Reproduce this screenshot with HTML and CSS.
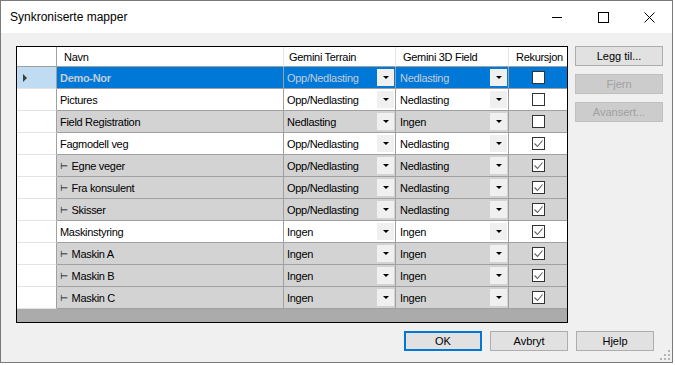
FILE: index.html
```html
<!DOCTYPE html>
<html lang="nb">
<head>
  <meta charset="UTF-8" />
  <title>Synkroniserte mapper</title>
  <link rel="stylesheet" href="styles.css">
</head>
<body>
  <div class="window">
    <div class="titlebar">
      <span class="title">Synkroniserte mapper</span>
      <div class="controls">
        <span><svg width="10" height="10" viewBox="0 0 10 10"><path d="M0 5.5h10" stroke="#000" stroke-width="1"/></svg></span>
        <span><svg width="11" height="11" viewBox="0 0 11 11"><rect x="0.5" y="0.5" width="10" height="10" fill="none" stroke="#000"/></svg></span>
        <span><svg width="11" height="11" viewBox="0 0 11 11"><path d="M0.5 0.5l10 10M10.5 0.5l-10 10" stroke="#000" stroke-width="1"/></svg></span>
      </div>
    </div>

    <div class="content">
      <div class="main">
        <div class="grid">
          <div class="row head">
            <div class="rh"></div>
            <div class="name">Navn</div>
            <div class="terrain">Gemini Terrain</div>
            <div class="field">Gemini 3D Field</div>
            <div class="rek">Rekursjon</div>
          </div>

          <div class="row sel">
            <div class="rh"><i class="pointer"></i></div>
            <div class="name"><b>Demo-Nor</b></div>
            <div class="terrain"><span>Opp/Nedlasting</span><i class="drop"></i></div>
            <div class="field"><span>Nedlasting</span><i class="drop"></i></div>
            <div class="rek"><i class="check"></i></div>
          </div>
          <div class="row">
            <div class="rh"></div>
            <div class="name">Pictures</div>
            <div class="terrain"><span>Opp/Nedlasting</span><i class="drop"></i></div>
            <div class="field"><span>Nedlasting</span><i class="drop"></i></div>
            <div class="rek"><i class="check"></i></div>
          </div>
          <div class="row alt">
            <div class="rh"></div>
            <div class="name">Field Registration</div>
            <div class="terrain"><span>Nedlasting</span><i class="drop"></i></div>
            <div class="field"><span>Ingen</span><i class="drop"></i></div>
            <div class="rek"><i class="check"></i></div>
          </div>
          <div class="row">
            <div class="rh"></div>
            <div class="name">Fagmodell veg</div>
            <div class="terrain"><span>Opp/Nedlasting</span><i class="drop"></i></div>
            <div class="field"><span>Nedlasting</span><i class="drop"></i></div>
            <div class="rek"><i class="check on"></i></div>
          </div>
          <div class="row alt">
            <div class="rh"></div>
            <div class="name"><span class="branch">⊢</span>Egne veger</div>
            <div class="terrain"><span>Opp/Nedlasting</span><i class="drop"></i></div>
            <div class="field"><span>Nedlasting</span><i class="drop"></i></div>
            <div class="rek"><i class="check on"></i></div>
          </div>
          <div class="row alt">
            <div class="rh"></div>
            <div class="name"><span class="branch">⊢</span>Fra konsulent</div>
            <div class="terrain"><span>Opp/Nedlasting</span><i class="drop"></i></div>
            <div class="field"><span>Nedlasting</span><i class="drop"></i></div>
            <div class="rek"><i class="check on"></i></div>
          </div>
          <div class="row alt">
            <div class="rh"></div>
            <div class="name"><span class="branch">⊢</span>Skisser</div>
            <div class="terrain"><span>Opp/Nedlasting</span><i class="drop"></i></div>
            <div class="field"><span>Nedlasting</span><i class="drop"></i></div>
            <div class="rek"><i class="check on"></i></div>
          </div>
          <div class="row">
            <div class="rh"></div>
            <div class="name">Maskinstyring</div>
            <div class="terrain"><span>Ingen</span><i class="drop"></i></div>
            <div class="field"><span>Ingen</span><i class="drop"></i></div>
            <div class="rek"><i class="check on"></i></div>
          </div>
          <div class="row alt">
            <div class="rh"></div>
            <div class="name"><span class="branch">⊢</span>Maskin A</div>
            <div class="terrain"><span>Ingen</span><i class="drop"></i></div>
            <div class="field"><span>Ingen</span><i class="drop"></i></div>
            <div class="rek"><i class="check on"></i></div>
          </div>
          <div class="row alt">
            <div class="rh"></div>
            <div class="name"><span class="branch">⊢</span>Maskin B</div>
            <div class="terrain"><span>Ingen</span><i class="drop"></i></div>
            <div class="field"><span>Ingen</span><i class="drop"></i></div>
            <div class="rek"><i class="check on"></i></div>
          </div>
          <div class="row alt">
            <div class="rh"></div>
            <div class="name"><span class="branch">⊢</span>Maskin C</div>
            <div class="terrain"><span>Ingen</span><i class="drop"></i></div>
            <div class="field"><span>Ingen</span><i class="drop"></i></div>
            <div class="rek"><i class="check on"></i></div>
          </div>
        </div>

        <div class="side">
          <button class="btn">Legg til...</button>
          <button class="btn" disabled>Fjern</button>
          <button class="btn" disabled>Avansert...</button>
        </div>
      </div>

      <div class="footer">
        <button class="btn default">OK</button>
        <button class="btn">Avbryt</button>
        <button class="btn">Hjelp</button>
      </div>

      <svg class="grip" width="12" height="12" viewBox="0 0 12 12">
        <rect x="9" y="1" width="2" height="2" fill="#b4b4b4"/>
        <rect x="5" y="5" width="2" height="2" fill="#b4b4b4"/>
        <rect x="9" y="5" width="2" height="2" fill="#b4b4b4"/>
        <rect x="1" y="9" width="2" height="2" fill="#b4b4b4"/>
        <rect x="5" y="9" width="2" height="2" fill="#b4b4b4"/>
        <rect x="9" y="9" width="2" height="2" fill="#b4b4b4"/>
      </svg>
    </div>
  </div>
</body>
</html>
```

FILE: styles.css
```css
* {
  margin: 0;
  padding: 0;
  box-sizing: border-box;
}

body {
  background: #fff;
  font-family: "Liberation Sans", Arial, sans-serif;
  font-size: 11px;
  color: #000;
}

.window {
  width: 673px;
  height: 363px;
  border: 1px solid #7a7a7a;
  display: flex;
  flex-direction: column;
}

/* Title bar */
.titlebar {
  height: 32px;
  flex-shrink: 0;
  background: #fff;
  display: flex;
  align-items: center;
}

.title {
  flex: 1;
  padding-left: 9px;
  font-size: 12px;
}

.controls {
  display: flex;
  align-self: stretch;
}

.controls span {
  width: 46px;
  display: flex;
  align-items: center;
  justify-content: center;
}

/* Dialog body */
.content {
  flex: 1;
  position: relative;
  background: #f0f0f0;
  padding: 13px 0 0 15px;
}

.main {
  display: flex;
  align-items: flex-start;
  gap: 7px;
}

.grid {
  width: 552px;
  height: 277px;
  border: 1px solid #000;
  background: #ababab;
  display: flex;
  flex-direction: column;
  letter-spacing: -0.3px;
}

.row {
  display: flex;
  height: 22px;
  flex-shrink: 0;
  background: #fff;
}

.row > div {
  display: flex;
  align-items: center;
  border-right: 1px solid #a0a0a0;
  border-bottom: 1px solid #a0a0a0;
  white-space: nowrap;
  overflow: hidden;
}

.row .rh {
  width: 40px;
  background: #fff;
  border-bottom-color: #e3e3e3;
}

.row .name {
  width: 227px;
  padding-left: 3px;
}

.row .terrain {
  width: 112px;
  padding-left: 3px;
}

.row .field {
  width: 113px;
  padding-left: 4px;
}

.row .rek {
  width: 58px;
  border-right: 0;
  justify-content: center;
}

.row.alt {
  background: #d3d3d3;
}

.row.sel {
  background: #0078d7;
  color: #c3cdd8;
}

.row.sel .rh {
  background: #bfdcf3;
}

/* Column headers */
.row.head {
  height: 20px;
}

.row.head > div {
  border-right-color: #e5e5e5;
}

.row.head .rh {
  border-right-color: #a0a0a0;
  border-bottom-color: #a0a0a0;
}

.row.head .name {
  padding-left: 7px;
}

.row.head .terrain {
  padding-left: 5px;
}

.row.head .field {
  padding-left: 7px;
}

.row.head .rek {
  justify-content: flex-start;
  padding-left: 7px;
}

.pointer {
  margin-left: 6px;
  border-left: 4px solid #3c3c3c;
  border-top: 4px solid transparent;
  border-bottom: 4px solid transparent;
}

.branch {
  font-family: "DejaVu Sans", sans-serif;
  font-size: 9px;
  margin-right: 4px;
}

.drop {
  margin-left: auto;
  margin-right: 1px;
  width: 17px;
  height: 17px;
  flex-shrink: 0;
  background: #f0f0f0;
  display: flex;
  align-items: center;
  justify-content: center;
}

.drop::after {
  content: "";
  border-left: 3px solid transparent;
  border-right: 3px solid transparent;
  border-top: 3px solid #000;
}

.check {
  width: 13px;
  height: 13px;
  border: 1px solid #333;
  background: #fff;
}

.check.on {
  background: #fff url("data:image/svg+xml,%3Csvg xmlns='http://www.w3.org/2000/svg' width='11' height='11'%3E%3Cpath d='M1.5 5.5l3 3 5-6' fill='none' stroke='%23606060' stroke-width='1.1'/%3E%3C/svg%3E") no-repeat center;
}

/* Buttons */
.side {
  display: flex;
  flex-direction: column;
  gap: 8px;
}

.btn {
  width: 88px;
  height: 20px;
  font: inherit;
  color: #000;
  background: #e1e1e1;
  border: 1px solid #adadad;
}

.btn:disabled {
  background: #cccccc;
  border-color: #bfbfbf;
  color: #a0a0a0;
}

.footer {
  display: flex;
  justify-content: flex-end;
  gap: 8px;
  margin-top: 8px;
  padding-right: 18px;
}

.footer .btn {
  width: 78px;
}

.btn.default {
  border: 2px solid #0078d7;
}

.grip {
  position: absolute;
  right: 1px;
  bottom: 1px;
}
```
